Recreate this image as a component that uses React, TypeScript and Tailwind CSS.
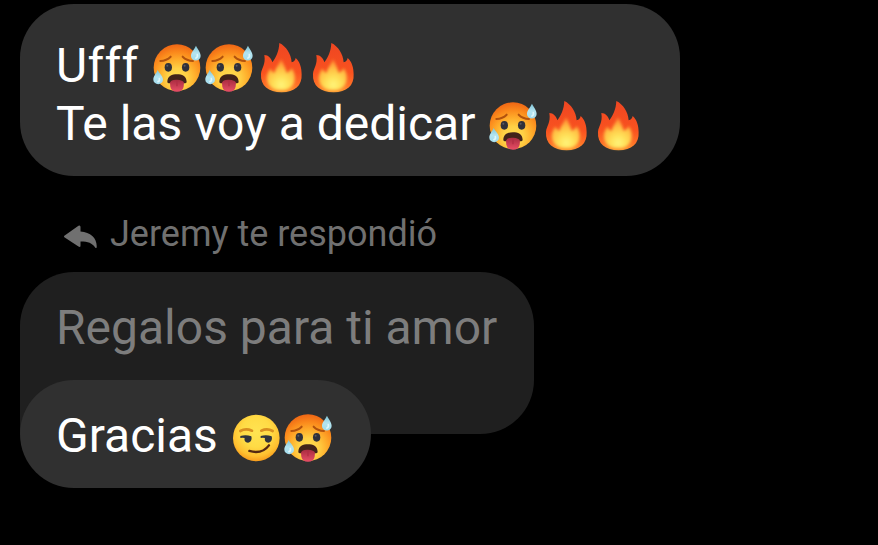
import React from 'react';

// shared gradients for the emoji drawings
const EmojiDefs = () => (
  <svg width="0" height="0" className="absolute" aria-hidden="true">
    <defs>
      <radialGradient id="hot" gradientUnits="userSpaceOnUse" cx="79" cy="116" r="104">
        <stop offset="0" stopColor="#ffdf50" />
        <stop offset="0.3" stopColor="#ffd045" />
        <stop offset="0.52" stopColor="#ffb02d" />
        <stop offset="0.76" stopColor="#fb8a1c" />
        <stop offset="1" stopColor="#ee6414" />
      </radialGradient>
      <radialGradient id="smirk" gradientUnits="userSpaceOnUse" cx="79" cy="66" r="90">
        <stop offset="0" stopColor="#ffe352" />
        <stop offset="0.5" stopColor="#ffdb45" />
        <stop offset="0.8" stopColor="#ffc030" />
        <stop offset="1" stopColor="#f7971a" />
      </radialGradient>
      <linearGradient id="drop" x1="0" y1="0" x2="0" y2="1">
        <stop offset="0" stopColor="#7fc4d6" />
        <stop offset="0.5" stopColor="#b4e4f0" />
        <stop offset="1" stopColor="#a2dced" />
      </linearGradient>
      <linearGradient id="tongue" x1="0" y1="0" x2="0" y2="1">
        <stop offset="0" stopColor="#a92c40" />
        <stop offset="1" stopColor="#e84e66" />
      </linearGradient>
      <linearGradient id="flameOuter" x1="0" y1="0" x2="0" y2="1">
        <stop offset="0" stopColor="#ee4622" />
        <stop offset="0.6" stopColor="#f9521f" />
        <stop offset="0.85" stopColor="#ff7127" />
        <stop offset="1" stopColor="#ff962f" />
      </linearGradient>
      <radialGradient id="flameInner" gradientUnits="userSpaceOnUse" cx="79" cy="134" r="76">
        <stop offset="0" stopColor="#fff47a" />
        <stop offset="0.3" stopColor="#ffe058" />
        <stop offset="0.6" stopColor="#ffc044" />
        <stop offset="1" stopColor="#ff8230" />
      </radialGradient>
      <filter id="soft" x="-20%" y="-20%" width="140%" height="140%">
        <feGaussianBlur stdDeviation="5" />
      </filter>
    </defs>
  </svg>
);

const HotFace = () => (
  <svg viewBox="0 0 157 162" className="inline-block h-[54px] w-[52.3px] align-[-12px]" role="img" aria-label="Hot face">
    <circle cx="78" cy="83" r="70" fill="url(#hot)" />
    <path d="M28 63 Q47 62 59 50" fill="none" stroke="#b1520e" strokeWidth="6" strokeLinecap="round" />
    <path d="M95 50 Q107 62 126 63" fill="none" stroke="#b1520e" strokeWidth="6" strokeLinecap="round" />
    <ellipse cx="52" cy="82" rx="11" ry="13" fill="#30313b" />
    <ellipse cx="104" cy="82" rx="11" ry="13" fill="#30313b" />
    <circle cx="49" cy="77" r="3" fill="#5c5b60" />
    <circle cx="101" cy="77" r="3" fill="#5c5b60" />
    <path d="M49 125 C50 108 63 103 78 103 S106 108 107 125 C107 132 98 129 78 129 S49 132 49 125 Z" fill="#41231a" />
    <path d="M57 128 Q60 118 78 119 T99 128 L98 140 Q95 155 78 155 T58 140 Z" fill="url(#tongue)" />
    <path d="M78 124 V137" stroke="#b32d45" strokeWidth="4" strokeLinecap="round" />
    <path d="M135 17 C129 30 120 37 120 48 A14 13 0 0 0 149 48 C149 37 141 29 135 17 Z" fill="url(#drop)" />
    <path d="M139 44 q2 7 -4 10" fill="none" stroke="#e0f8fb" strokeWidth="5" strokeLinecap="round" />
    <path d="M20 90 C15 102 7 108 7 119 A14 13 0 0 0 36 119 C36 108 26 102 20 90 Z" fill="url(#drop)" />
    <path d="M25 116 q2 7 -4 9" fill="none" stroke="#e0f8fb" strokeWidth="5" strokeLinecap="round" />
  </svg>
);

const Fire = () => (
  <svg viewBox="0 0 157 162" className="inline-block h-[54px] w-[52.3px] align-[-12px]" role="img" aria-label="Fire">
    <path
      d="M73 9 C93 18 109 43 110 67 C117 66 121 60 122 54 C135 65 140 84 140 103 C142 137 119 157 80 157 C40 157 16 137 18 102 C19 84 33 75 28 45 C40 45 49 55 52 67 C63 53 72 34 73 9 Z"
      fill="url(#flameOuter)"
    />
    <path
      d="M78 58 C84 70 91 83 95 98 C102 97 107 91 110 85 C117 94 121 105 119 119 C117 139 103 151 79 151 C55 151 39 141 36 120 C34 105 40 92 47 86 C49 92 53 97 59 98 C62 82 73 74 78 58 Z"
      fill="url(#flameInner)"
      filter="url(#soft)"
    />
  </svg>
);

const Smirk = () => (
  <svg viewBox="0 0 157 162" className="inline-block h-[54px] w-[52.3px] align-[-12px]" role="img" aria-label="Smirking face">
    <circle cx="79" cy="84" r="70" fill="url(#smirk)" />
    <path d="M31 63 Q47 54 66 62" fill="none" stroke="#d98f20" strokeWidth="8" strokeLinecap="round" />
    <path d="M94 62 Q112 54 128 63" fill="none" stroke="#d98f20" strokeWidth="8" strokeLinecap="round" />
    <path d="M31 78 Q48 73 64 79 C67 90 62 98 54 98 C46 98 42 91 44 84 Q37 82 31 84 Z" fill="#30343e" />
    <path d="M92 78 Q109 73 125 79 C128 90 123 98 115 98 C107 98 103 91 105 84 Q98 82 92 84 Z" fill="#30343e" />
    <path d="M58 123 Q96 134 117 106" fill="none" stroke="#542812" strokeWidth="7" strokeLinecap="round" />
  </svg>
);

const ReplyArrow = () => (
  <svg viewBox="26 30 98 71" className="mt-[5px] h-[24px] w-[33px]" aria-hidden="true">
    <path
      d="M27 62 L69 32 Q75 29 75 36 V49 C106 51 125 70 123 96 Q122 101 118 96 C110 84 98 79 75 79 V91 Q75 98 69 94 L27 66 Q25 64 27 62 Z"
      fill="#707070"
    />
  </svg>
);

const App = () => {
  return (
    <div className="flex h-[545px] w-[878px] flex-col items-start overflow-hidden bg-black pl-5 pt-1 font-['Roboto',sans-serif] text-[48px] leading-[58px] text-white whitespace-nowrap">
      <EmojiDefs />
      <div className="rounded-[54px] bg-[#303030] px-9 pt-[33px] pb-[23px]">
        <p><span className="tracking-[0.3px]">Ufff </span><HotFace /><HotFace /><Fire /><Fire /></p>
        <p>Te las voy a dedicar <HotFace /><Fire /><Fire /></p>
      </div>

      {/* reply label */}
      <div className="mt-[26px] mb-[6px] flex h-16 items-center gap-[13px] pl-[44px] text-[36px] leading-[44px] text-[#707070]">
        <ReplyArrow />
        <p>Jeremy te respondió</p>
      </div>

      {/* quoted message with the answer over it */}
      <div className="h-[162px] rounded-[54px] rounded-bl-none bg-[#1f1f1f] pl-9 pr-[37px] pt-[27px] text-[#7d7d7d]">
        <p>Regalos para ti amor</p>
      </div>
      <div className="relative -mt-[54px] rounded-[54px] bg-[#303030] pl-9 pr-[37px] pt-[27px] pb-[23px]">
        <p>Gracias <Smirk /><HotFace /></p>
      </div>
    </div>
  );
}

export default App;
